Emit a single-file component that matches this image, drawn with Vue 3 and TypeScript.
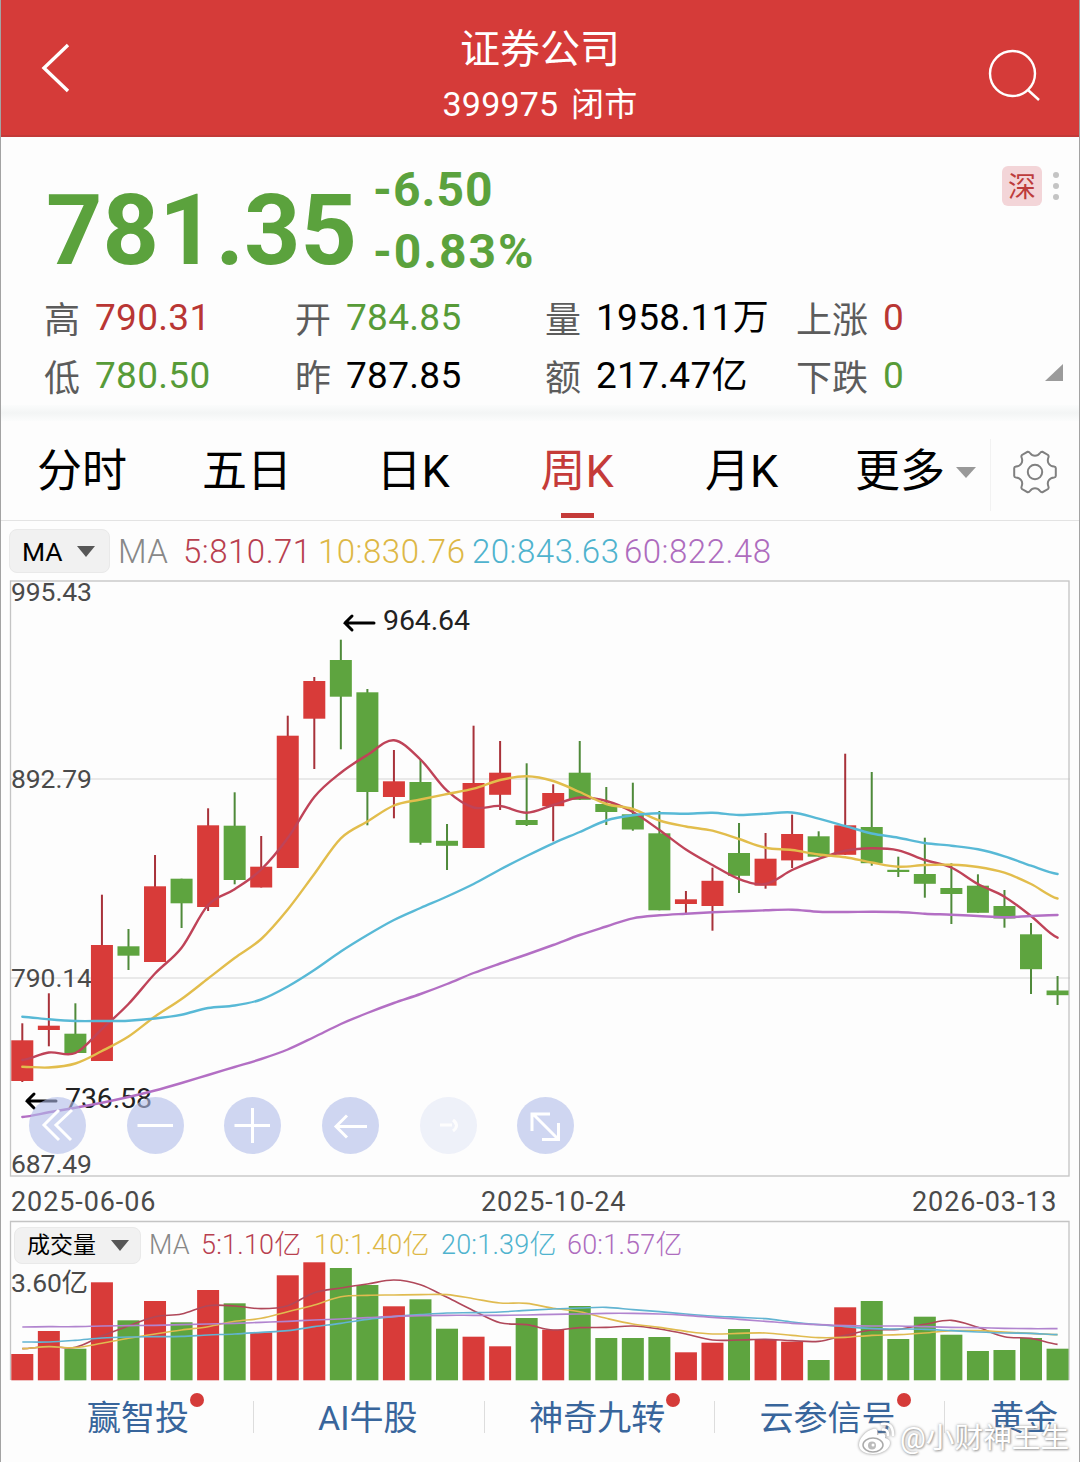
<script setup lang="ts">
type Candle = [dir: 'r' | 'g', top: number, bottom: number, high: number, low: number, vol: number]

const candles: Candle[] = [
  ['r', 1040.3, 1081, 1023.3, 1082, 1354], ['r', 1025.7, 1030, 993.3, 1046.3, 1331],
  ['g', 1033.7, 1053, 1003.3, 1053, 1348.7], ['r', 945, 1061, 894.7, 1061, 1282.3],
  ['g', 946.3, 955.7, 929, 970, 1320.3], ['r', 886.3, 962, 855, 962, 1301],
  ['g', 878.7, 903.3, 878.7, 928, 1322.3], ['r', 825.3, 907, 808.3, 911, 1290],
  ['g', 825.7, 880, 792.3, 884.3, 1303.3], ['r', 866.7, 887.5, 836, 887.5, 1332.3],
  ['r', 735.7, 868, 715.7, 868, 1275.3], ['r', 681, 718.7, 677, 769, 1262.3],
  ['g', 660, 696.7, 639.7, 749.3, 1268], ['g', 692.3, 792, 689, 825.3, 1285],
  ['r', 781.3, 797, 750, 818.3, 1306.3], ['g', 782, 842.8, 759, 844.7, 1299.3],
  ['g', 840.8, 845.8, 824, 870, 1328.7], ['r', 783, 848, 725.7, 848, 1336.7],
  ['r', 772.7, 794.8, 741, 810, 1346.3], ['g', 820, 825, 763.3, 826, 1318],
  ['r', 793, 806.2, 784.3, 841.3, 1329.7], ['g', 772.7, 799.8, 741, 800, 1306],
  ['g', 804, 812, 787, 825, 1338], ['g', 814.3, 829.5, 782.7, 830.7, 1338],
  ['g', 833.3, 910.3, 811, 910.3, 1337], ['r', 899.3, 904, 891, 915, 1352.3],
  ['r', 880.8, 906, 867.7, 930.7, 1342.7], ['g', 853, 875.8, 823, 893, 1329],
  ['r', 858.7, 885.7, 833, 888.7, 1339], ['r', 834, 860.4, 814.7, 868, 1341.7],
  ['g', 836.3, 856.7, 831.3, 856.7, 1360], ['r', 825.3, 854.8, 753.7, 854.8, 1307.3],
  ['g', 827, 863.2, 772, 865.7, 1301], ['g', 869.8, 872, 856.7, 877, 1339],
  ['g', 874, 883.8, 837.7, 897.7, 1316.7], ['g', 888, 894, 863.3, 924, 1334.7],
  ['g', 885.7, 912.8, 874.3, 912.8, 1351], ['g', 906, 918.5, 890, 927.7, 1350],
  ['g', 934.3, 969.2, 923, 994, 1338], ['g', 990.5, 995.2, 976, 1005, 1348.7],
]

const priceMa = [
  { color: '#bf4358', ys: [1060, 1052.5, 1053, 1029, 1004, 973.5, 947.7, 905, 889.3, 869.5, 838, 797, 772.7, 755, 740.3, 759.5, 790.7, 807.5, 806, 812.7, 805, 797.5, 801, 812, 830, 849.5, 865, 879, 884, 870, 859, 850.7, 848.3, 850.3, 860, 867.5, 884, 896.7, 916, 937.7] },
  { color: '#e2bd4c', ys: [1066.7, 1067.5, 1063.5, 1051, 1036.5, 1016.5, 999, 978.5, 958, 939, 909.5, 874, 838.3, 821.5, 805.5, 799.5, 794, 788.7, 780, 776.3, 781, 792, 804, 809, 820.5, 826.5, 830.7, 839, 847.7, 850, 854.5, 857.3, 862.5, 866.7, 865, 864.7, 867, 872.7, 884, 898.5] },
  { color: '#58b9d6', ys: [1016.7, 1019.3, 1021, 1021, 1020.7, 1018.5, 1014.7, 1008, 1005.5, 999.5, 986.5, 970, 951.5, 935, 920, 908, 896.5, 884, 869.5, 856, 843.3, 832, 820.5, 815.3, 813.3, 813.7, 812.7, 815, 813.7, 812.5, 818.7, 826, 833.5, 837.7, 843, 845.7, 849.3, 856.3, 865.7, 874] },
  { color: '#b36fc4', ys: [1117, 1112.3, 1107.7, 1102.7, 1097, 1090.5, 1083, 1075, 1067, 1059, 1049.5, 1037, 1024, 1013, 1003, 994, 984, 973, 963.5, 954.5, 945, 935, 926.5, 918.3, 915.3, 913.7, 912.3, 911.3, 910.3, 909.7, 911.7, 912, 911.7, 912, 913.7, 914.7, 916, 917.3, 916, 915] },
]

const third = (a: number[]) => a.map((v) => 1210 + v / 3)
const volMa = [
  { color: '#b0485a', ys: third([416, 410, 412, 378, 348, 320, 312, 287, 288, 296, 287, 248, 234, 222, 210, 224, 262, 302, 338, 344, 360, 353, 352, 348, 357, 372, 390, 390, 388, 392, 394, 376, 360, 358, 343, 331, 352, 380, 385, 403]) },
  { color: '#e0bb50', ys: third([416, 410, 413, 400, 385, 372, 360, 350, 334, 325, 305, 285, 260, 256, 255, 254, 254, 266, 279, 280, 295, 305, 325, 342, 352, 364, 372, 370, 369, 376, 383, 382, 376, 374, 369, 362, 362, 366, 370, 374]) },
  { color: '#62b4d2', ys: third([396, 396, 391, 384, 381, 380, 379, 375, 372, 367, 362, 350, 340, 328, 320, 314, 309, 308, 306, 301, 297, 294, 292, 299, 305, 312, 318, 322, 326, 336, 344, 350, 356, 357, 358, 362, 366, 369, 370, 374]) },
  { color: '#b184cf', ys: third([351, 350, 350, 348, 347, 346, 344, 342, 340, 337, 334, 330, 327, 323, 319, 317, 316, 316, 316, 315, 313, 312, 310, 310, 312, 316, 322, 328, 334, 340, 344, 347, 348, 348, 350, 352, 353, 355, 356, 356]) },
]

const cx = (i: number) => 22.3 + i * 26.545

function smooth(ys: number[]): string {
  let d = `M${cx(0)} ${ys[0]}`
  const at = (i: number) => ys[Math.max(0, Math.min(ys.length - 1, i))]
  const step = 26.545 / 3
  for (let i = 0; i < ys.length - 1; i++) {
    const c1 = at(i) + (at(i + 1) - at(i - 1)) / 6
    const c2 = at(i + 1) - (at(i + 2) - at(i)) / 6
    d += `C${cx(i) + step} ${c1} ${cx(i + 1) - step} ${c2} ${cx(i + 1)} ${at(i + 1)}`
  }
  return d
}

const fill = (c: Candle) => (c[0] === 'r' ? '#d83b39' : '#5ea43f')
const wick = (c: Candle) => (c[0] === 'r' ? '#a8323a' : '#4f8a3a')

const stats = [
  { label: '高', value: '790.31', tone: 'up' }, { label: '开', value: '784.85', tone: 'down' },
  { label: '量', value: '1958.11', unit: '万', tone: '' }, { label: '上涨', value: '0', tone: 'up' },
  { label: '低', value: '780.50', tone: 'down' }, { label: '昨', value: '787.85', tone: '' },
  { label: '额', value: '217.47', unit: '亿', tone: '' }, { label: '下跌', value: '0', tone: 'down' },
]
const tabs = ['分时', '五日', '日K', '周K', '月K']
const links = [
  { text: '赢智投', dot: true }, { text: 'AI牛股', dot: false }, { text: '神奇九转', dot: true },
  { text: '云参信号', dot: true }, { text: '黄金', dot: false },
]
const tools = [
  'M30 13L15 28L30 43M43 13L27 28L42 43', 'M10.500 28.500H46', 'M10.500 28.500H46M28.500 11V46',
  'M14 29.500H45M25 18.500L14 29.500L25 40.500', 'M20 28h12M33 23q7 5.500 0 11', 'M16 17L41 42M15 34V17H33M25 42.500H41.500V26',
]
</script>

<template>
  <div class="app">
    <header class="top">
      <svg class="back" width="32" height="52" viewBox="0 0 32 52"><path d="M28 3L4 26L28 49" /></svg>
      <div class="title">
        <div class="name">证券公司</div>
        <div class="code">399975 <span>闭市</span></div>
      </div>
      <svg class="search" width="54" height="54" viewBox="0 0 54 54"><circle cx="25.500" cy="25.500" r="22.500" /><path d="M41 42L52 52" /></svg>
    </header>

    <section class="quote">
      <div class="headline">
        <div class="price">781.35</div>
        <div class="change"><div>-6.50</div><div class="pct">-0.83%</div></div>
        <div class="market"><span class="badge">深</span><span class="dots"><i /><i /><i /></span></div>
      </div>
      <div class="stats">
        <div v-for="s in stats" :key="s.label" class="stat">
          <span class="label">{{ s.label }}</span>
          <span class="value" :class="s.tone">{{ s.value }}<b v-if="s.unit">{{ s.unit }}</b></span>
        </div>
      </div>
      <svg class="corner" width="18" height="18" viewBox="0 0 18 18"><path d="M18 0V17H0Z" /></svg>
    </section>
    <div class="band" />

    <nav class="tabs">
      <div v-for="t in tabs" :key="t" class="tab" :class="{ active: t === '周K' }">{{ t }}</div>
      <div class="tab more">更多<i class="caret" /></div>
      <div class="gear">
        <svg width="46" height="46" viewBox="0 0 46 46">
          <path d="M15.500 2.800Q17 2.500 18 4Q20 6.800 23 6.800Q26 6.800 28 4Q29 2.500 30.500 2.800L36 6Q37 7 36.400 8.500Q35 12 36.800 14.700Q38.500 17.300 42 17.500Q43.700 17.700 43.800 19V27Q43.700 28.300 42 28.500Q38.500 28.700 36.800 31.300Q35 34 36.400 37.500Q37 39 36 40L30.500 43.200Q29 43.500 28 42Q26 39.200 23 39.200Q20 39.200 18 42Q17 43.500 15.500 43.200L10 40Q9 39 9.600 37.500Q11 34 9.200 31.300Q7.500 28.700 4 28.500Q2.300 28.300 2.200 27V19Q2.300 17.700 4 17.500Q7.500 17.300 9.200 14.700Q11 12 9.600 8.500Q9 7 10 6Z" />
          <circle cx="23" cy="23" r="7.200" />
        </svg>
      </div>
    </nav>

    <div class="legend">
      <div class="pill">MA<i class="caret dark" /></div>
      <div class="ma">
        <span>MA</span><span class="c5">5:810.71</span><span class="c10">10:830.76</span><span class="c20">20:843.63</span><span class="c60">60:822.48</span>
      </div>
    </div>

    <div class="chart">
      <svg width="1080" height="604" viewBox="0 578 1080 604">
        <path class="grid" d="M10 779H1070M10 978H1070" />
        <rect class="frame" x="10.500" y="581" width="1058.500" height="595" />
        <g class="axis">
          <text x="11" y="600.500" textLength="81">995.43</text>
          <text x="11" y="787.500" textLength="81">892.79</text>
          <text x="11" y="986.500" textLength="81">790.14</text>
          <text x="11" y="1173" textLength="81">687.49</text>
        </g>
        <g v-for="(c, i) in candles" :key="i">
          <rect :x="cx(i) - 1" :y="c[3]" width="2" :height="c[4] - c[3]" :fill="wick(c)" />
          <rect :x="cx(i) - 11" :y="c[1]" width="22" :height="c[2] - c[1]" :fill="fill(c)" />
        </g>
        <g class="note">
          <text x="383" y="630" textLength="87">964.64</text>
          <path d="M374 623H345M352 616L345 623L352 630" />
          <text x="65" y="1108" textLength="87">736.58</text>
          <path d="M56 1101H27M34 1094L27 1101L34 1108" />
        </g>
        <path v-for="m in priceMa" :key="m.color" class="line" :d="smooth(m.ys)" :stroke="m.color" />
      </svg>
      <div class="tools">
        <svg v-for="(t, i) in tools" :key="i" :class="{ faint: i === 4 }" width="57" height="57" viewBox="0 0 57 57">
          <circle cx="28.500" cy="28.500" r="28.500" /><path :d="t" />
        </svg>
      </div>
    </div>

    <div class="dates"><span>2025-06-06</span><span>2025-10-24</span><span>2026-03-13</span></div>

    <div class="volume">
      <svg width="1080" height="162" viewBox="0 1220 1080 162">
        <path class="frame" d="M10.500 1380V1221.500H1069V1380" />
        <rect v-for="(c, i) in candles" :key="i" :x="cx(i) - 11" :y="c[5]" width="22" :height="1380.300 - c[5]" :fill="fill(c)" />
        <path v-for="m in volMa" :key="m.color" class="thin" :d="smooth(m.ys)" :stroke="m.color" />
        <g class="axis"><text x="11" y="1292" textLength="77">3.60亿</text></g>
      </svg>
      <div class="vlegend">
        <div class="pill small"><span>成交量</span><i class="caret dark" /></div>
        <div class="vma">
          <span>MA</span><span class="c5">5:1.10亿</span><span class="c10">10:1.40亿</span><span class="c20">20:1.39亿</span><span class="c60">60:1.57亿</span>
        </div>
      </div>
    </div>

    <footer class="links">
      <div v-for="l in links" :key="l.text" class="link"><span>{{ l.text }}<i v-if="l.dot" /></span></div>
    </footer>

    <div class="mark">
      <svg width="40" height="36" viewBox="0 0 40 36">
        <path class="body" d="M16 9C9 11 2 18 2 25C2 31 9 34 16 34C26 34 33 28 33 23C33 20 31 19 28 18C29 14 27 12 20 15C21 10 20 8 16 9Z" />
        <ellipse class="eye" cx="16" cy="25" rx="10" ry="7" /><circle class="pupil" cx="15" cy="25.500" r="4" /><circle class="glint" cx="16" cy="25" r="1.500" />
        <path class="wave" d="M25 4Q36 2 36 15M26 9.500Q31 9 31 15" />
      </svg>
      <span>@小财神王生</span>
    </div>
  </div>
</template>

<style>
body { margin: 0; background: #fdfdfd; }
</style>

<style scoped>
.app { position: relative; box-sizing: border-box; width: 1080px; height: 1462px; overflow: hidden; background: #fdfdfd; font-family: Roboto, "Noto Sans CJK SC", sans-serif; color: #000; }
.app::after { content: ""; position: absolute; inset: 0; border: solid #a3a3a3; border-width: 0 1px; pointer-events: none; }
svg { display: block; fill: none; flex: none; overflow: visible; }
.top { display: flex; justify-content: space-between; height: 137px; box-sizing: border-box; padding: 0 39px 0 40px; background: #d53b39; border-bottom: 2px solid #c23a38; color: #fff; }
.back { margin-top: 42px; stroke: #fff; stroke-width: 3.4; }
.search { margin-top: 48px; stroke: #fff; stroke-width: 2.4; }
.title { text-align: center; padding-left: 21px; }
.name { margin-top: 25px; height: 50px; line-height: 50px; font-size: 40px; }
.code { margin-top: 4px; height: 50px; line-height: 50px; font-size: 34px; letter-spacing: .2px; }
.code span { font-size: 33px; margin-left: 4px; }
.quote { position: relative; height: 268px; }
.headline { display: flex; height: 152px; padding-left: 46px; color: #5ba23d; font-weight: 700; }
.price { width: 327px; font-size: 98.500px; line-height: 116px; padding-top: 36px; }
.change { font-size: 48px; line-height: 62px; padding-top: 22px; flex: 1; letter-spacing: 1px; }
.pct { letter-spacing: 1.9px; }
.market { display: flex; padding: 29px 21px 0 0; gap: 11px; font-weight: 400; }
.badge { width: 40px; height: 40px; line-height: 44px; text-align: center; border-radius: 6px; background: #f3d5d8; color: #bd3c3c; font-size: 28px; }
.dots { display: flex; flex-direction: column; gap: 5px; padding-top: 6px; }
.dots i { width: 6px; height: 6px; border-radius: 3px; background: #c4c4c4; }
.stats { display: grid; grid-template-columns: 251px 250px 251px auto; grid-auto-rows: 58px; padding-left: 44px; }
.stat { display: flex; line-height: 58px; gap: 15px; }
.label { font-size: 36px; color: #5c5c5c; padding-top: 3px; }
.value { font-size: 37px; letter-spacing: .3px; }
.value b { font-weight: 400; font-size: 36px; }
.up { color: #b93634; }
.down { color: #579b38; }
.corner { position: absolute; right: 17px; top: 227px; fill: #9b9b9b; }
.band { height: 16px; background: linear-gradient(#fbfcfc, #f3f5f5 50%, #fbfcfc); }
.tabs { display: grid; grid-template-columns: 164px 166px 166px 162px 167px 166px auto; height: 100px; box-sizing: border-box; border-bottom: 1px solid #e3e3e3; }
.tab { position: relative; font-size: 45px; line-height: 102px; text-align: center; }
.tab.active { color: #c53b39; }
.tab.active::after { content: ""; position: absolute; left: 65px; top: 92px; width: 33px; height: 5px; background: #c53b39; }
.more { display: flex; align-items: center; justify-content: flex-end; gap: 11px; padding-right: 15px; }
.more::after { content: ""; position: absolute; right: 0; top: 18px; width: 1px; height: 72px; background: #f2f2f2; }
.caret { border: solid transparent; border-width: 11px 10.500px 0; border-top-color: #999; }
.caret.dark { border-top-color: #575757; border-width: 11px 9.500px 0; }
.gear { display: flex; align-items: center; padding-left: 21px; }
.gear svg { stroke: #808080; stroke-width: 2; }
.legend { display: flex; align-items: center; height: 57px; padding: 3px 0 0 9px; box-sizing: border-box; }
.pill { display: flex; align-items: center; justify-content: space-between; box-sizing: border-box; width: 101px; height: 44px; padding: 0 14px 0 12px; border: 1px solid #e9e9e9; border-radius: 8px; background: #f1f1f1; font-size: 26.500px; }
.ma { display: grid; grid-template-columns: 65px 135px 154px 152px auto; margin-left: 8px; padding-top: 1px; font-size: 33px; font-weight: 300; letter-spacing: .5px; color: #888; }
.c5 { color: #b8404f; }
.c10 { color: #ddb846; }
.c20 { color: #4fb3ce; }
.c60 { color: #ae6cbe; }
.chart { position: relative; height: 604px; }
.grid { stroke: #e2e2e2; stroke-width: 1.4; }
.frame { stroke: #c4c4c4; stroke-width: 1.3; }
.axis { fill: #4a4a4a; font-size: 26.500px; }
.note { font-size: 28.500px; fill: #222; }
.note path { fill: none; stroke: #000; stroke-width: 3; stroke-linecap: round; }
.line { stroke-width: 2.4; stroke-linecap: round; }
.thin { stroke-width: 1.6; }
.tools { position: absolute; left: 29px; top: 519px; display: flex; gap: 40.700px; }
.tools circle { fill: #b0bce9; fill-opacity: .6; }
.tools path { stroke: #fff; stroke-width: 3; }
.tools .faint { opacity: .32; }
.dates { display: grid; grid-template-columns: 470px 431px auto; height: 38px; line-height: 41px; padding-left: 11px; font-size: 27px; letter-spacing: .9px; color: #4a4a4a; }
.volume { position: relative; height: 162px; }
.vlegend { position: absolute; left: 14px; top: 6px; display: flex; align-items: center; }
.pill.small { width: 127px; height: 37px; font-size: 23px; padding: 0 11px 0 12px; }
.pill.small span { margin-top: -4px; }
.vma { display: grid; grid-template-columns: 52px 113px 127px 126px auto; margin: 1px 0 0 8px; font-size: 27px; line-height: 37px; font-weight: 300; letter-spacing: .2px; color: #888; }
.links { display: grid; grid-template-columns: 254px 230.500px 230.500px 230px 135px; align-items: start; height: 80px; padding-top: 19px; box-sizing: border-box; color: #38659b; }
.link { height: 32px; line-height: 34px; font-size: 34px; text-align: center; border-right: 1px solid #ddd; box-sizing: border-box; white-space: nowrap; }
.link:first-child { padding-left: 23px; }
.link:nth-child(3), .link:nth-child(4) { padding-right: 4px; }
.link:nth-child(2) { padding-right: 2px; }
.link:last-child { border: 0; padding-left: 23px; }
.link span { position: relative; }
.link i { position: absolute; right: -15px; top: -5px; width: 14px; height: 14px; border-radius: 7px; background: #d53b39; }
.mark { position: absolute; left: 857px; top: 1418px; display: flex; align-items: center; gap: 3px; color: #fff; font-size: 28.700px; line-height: 40px; text-shadow: 0 0 3px #999, 1px 1px 2px #aaa; white-space: nowrap; }
.mark svg { filter: drop-shadow(0 0 1.500px #888); }
.body { fill: #fff; }
.eye { fill: #fff; stroke: #aaa; stroke-width: 1.5; }
.pupil { fill: #bbb; }
.glint { fill: #fff; }
.wave { stroke: #fff; stroke-width: 2.6; stroke-linecap: round; }
</style>
